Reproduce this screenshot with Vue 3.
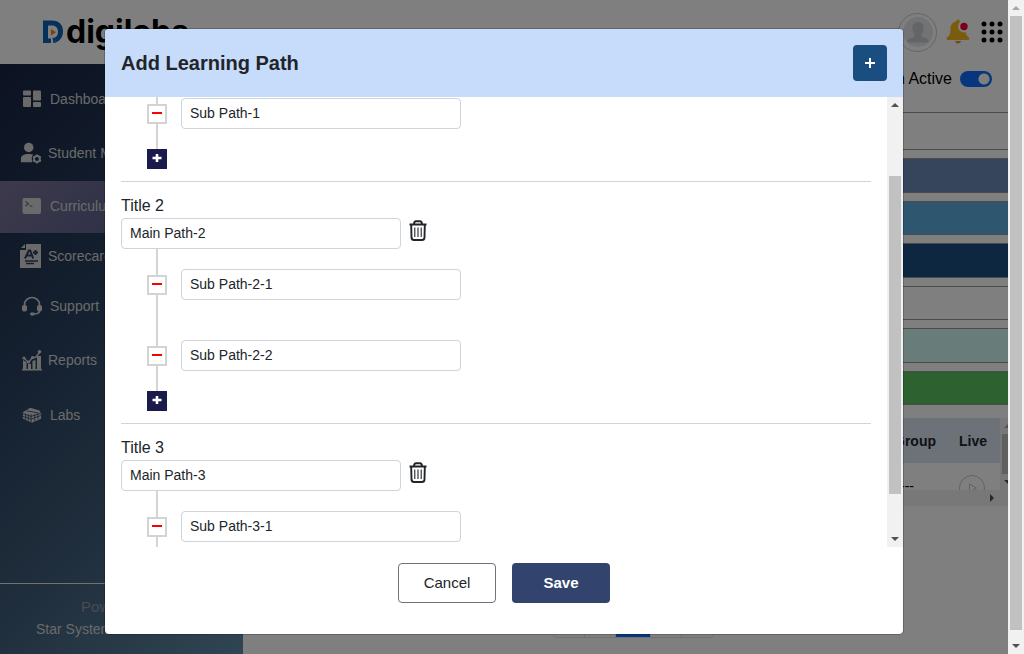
<script setup>
import { ref, onMounted } from 'vue'

const nav = [
  { label: 'Dashboard', icon: 'dashboard', size: 'tall' },
  { label: 'Student Management', icon: 'student', size: 'tall', wide: true },
  { label: 'Curriculum', icon: 'terminal', size: 'mid', active: true },
  { label: 'Scorecard', icon: 'score', size: 'short', wide: true },
  { label: 'Support', icon: 'support', size: 'mid' },
  { label: 'Reports', icon: 'reports', size: 'roomy', wide: true },
  { label: 'Labs', icon: 'labs', size: 'tall' }
]

const bars = ['slate', 'sky', 'navy', 'plain', 'mint', 'green']
const pages = ['«', '‹', '1', '›', '»']

const paths = ref([
  { id: 1, main: '', subs: ['Sub Path-1'] },
  { id: 2, main: 'Main Path-2', subs: ['Sub Path-2-1', 'Sub Path-2-2'] },
  { id: 3, main: 'Main Path-3', subs: ['Sub Path-3-1'] }
])

const list = ref(null)
onMounted(() => {
  list.value.scrollTop = 19
})

function addPath() {
  const id = paths.value.length + 1
  paths.value.push({ id, main: 'Main Path-' + id, subs: [] })
}
</script>

<template>
  <div class="screen">
    <div class="page">
      <header class="topbar">
        <div class="logo">
          <svg width="22" height="24" viewBox="0 0 22 24">
            <path d="M1 0.500h9c7 0 11 4 11 11 0 5.500-3 9.500-7.500 11l-.5-5c2-1 3-3 3-5.500 0-4-2-6.500-6.500-6.500H6V23H1z" fill="#0a62b4" />
            <path d="M5.500 23v-4.500H9V23zM10.500 18l3-.5V23h-2z" fill="#0a62b4" />
            <path d="M9 9l5 3.200-5 3.300z" fill="#f58220" />
          </svg>
          <span>digilabs</span>
        </div>
        <div class="tools">
          <span class="avatar">
            <svg width="30" height="30" viewBox="0 0 30 30">
              <circle cx="15" cy="15" r="15" fill="#e4e6ea" />
              <path d="M15 5c4 0 6 2.500 5.500 7-.3 2.500-1 4-2 5v2.500c2 1.200 5 1.500 7 3v3H4.500v-3c2-1.500 5-1.800 7-3V17c-1-1-1.700-2.500-2-5C9 7.500 11 5 15 5z" fill="#c6cbd3" />
            </svg>
          </span>
          <svg width="26" height="26" viewBox="0 0 26 26">
            <path d="M12 0.500c1 0 1.700.7 1.700 1.700C17.500 3 19.500 6 19.500 10c0 5 1 6.500 3.500 8.500.8.700.3 2.500-1 2.500H2c-1.300 0-1.800-1.800-1-2.500 2.500-2 3.500-3.500 3.500-8.500 0-4 2-7 5.800-7.800 0-1 .7-1.700 1.700-1.700z" fill="#f5b81c" />
            <path d="M9 22h6c-.3 1.600-1.500 2.500-3 2.500s-2.700-.9-3-2.500z" fill="#e59a12" />
            <circle cx="18" cy="7.500" r="6" fill="#fff" />
            <circle cx="18" cy="7.500" r="3.700" fill="#f50032" />
          </svg>
          <svg width="22" height="22" viewBox="0 0 22 22">
            <template v-for="r in 3" :key="r">
              <circle v-for="c in 3" :key="c" :cx="c * 8 - 5" :cy="r * 8 - 5" r="2.500" fill="#000" />
            </template>
          </svg>
        </div>
      </header>

      <div class="columns">
        <aside class="sidebar">
          <nav>
            <a v-for="item in nav" :key="item.label" href="#" class="nav-item" :class="[item.size, { active: item.active, wide: item.wide }]">
              <svg v-if="item.icon === 'dashboard'" width="20" height="18" viewBox="0 0 20 18" fill="currentColor">
                <rect x="1" y="0.500" width="8" height="5" rx="1" /><rect x="1" y="7" width="8" height="10" rx="1" />
                <rect x="11" y="0.500" width="8" height="10" rx="1" /><rect x="11" y="12" width="8" height="5" rx="1" />
              </svg>
              <svg v-else-if="item.icon === 'student'" width="24" height="24" viewBox="0 0 24 24" fill="currentColor">
                <circle cx="9.500" cy="6" r="5.200" />
                <path d="M1 22v-4c0-3 3-5 8.500-5 2 0 3.500.2 4.800.7-1.500 2-2 5-.8 8.300z" />
                <circle cx="18.500" cy="18.500" r="3.200" fill="none" stroke="currentColor" stroke-width="2" />
                <path d="M18.500 13.500v2M18.500 21.500v2M14.200 16l1.700 1M21.100 20l1.700 1M14.200 21l1.700-1M21.100 17l1.700-1" stroke="currentColor" stroke-width="2" />
              </svg>
              <svg v-else-if="item.icon === 'terminal'" width="20" height="18" viewBox="0 0 20 18">
                <rect x="0.500" y="1" width="18.500" height="16" rx="2" fill="currentColor" />
                <path d="M3.500 4.500l3 2.200-3 2.300M7.500 9h3" fill="none" stroke="#666997" stroke-width="1.200" />
              </svg>
              <svg v-else-if="item.icon === 'score'" width="22" height="26" viewBox="0 0 22 26">
                <path d="M6 1h15v24H0V7h6z" fill="currentColor" /><path d="M1 5l4-4v4z" fill="currentColor" />
                <path d="M5 15.500l3.800-8h1.400l3 8M7 12.500h5M13 9.500h5M15.500 7v5" fill="none" stroke="#2a3f61" stroke-width="2" />
                <path d="M5 18h13M6 20.500h8" stroke="#2a3f61" stroke-width="1.300" />
              </svg>
              <svg v-else-if="item.icon === 'support'" width="20" height="20" viewBox="0 0 20 20">
                <path d="M2.500 10V8.500a7.500 7 0 0 1 15 0V15q0 2.500-4.500 3" fill="none" stroke="currentColor" stroke-width="1.600" />
                <rect x="0" y="9" width="5" height="6.500" rx="2" fill="currentColor" /><rect x="15" y="9" width="5" height="6.500" rx="2" fill="currentColor" />
                <rect x="8" y="16.500" width="5" height="3" rx="1.400" fill="currentColor" />
              </svg>
              <svg v-else-if="item.icon === 'reports'" width="22" height="22" viewBox="0 0 22 22" fill="currentColor">
                <path d="M3 11l2 1.500h1.500V21H3zM8 15h3v6H8zM12.500 12l3-1v10h-3zM17 7h4v14h-4zM2 20h20v1.500H2z" />
                <path d="M4 9l4.500 4.500 4-5h3l4-5" fill="none" stroke="currentColor" stroke-width="1.400" />
                <circle cx="4" cy="9" r="1.600" /><circle cx="8.500" cy="13" r="1.600" /><circle cx="12.500" cy="8.500" r="1.600" /><circle cx="19.500" cy="2.700" r="1.800" />
              </svg>
              <svg v-else width="20" height="18" viewBox="0 0 22 18">
                <path d="M1 6l8-5 10 3 2 3v6l-10 4.500L1 13z" fill="currentColor" />
                <path d="M1 7.500l9 3L21 7M1 10.500l9 3 11-4M10 8v9M4 7.500v7M7 8.500v7M14 8v8M17.500 6v8M5 4.500l12 2" fill="none" stroke="#2c4466" stroke-width="0.900" />
              </svg>
              <span>{{ item.label }}</span>
            </a>
          </nav>
          <div class="powered">
            <p class="by">Powered By</p>
            <p class="company">Star Systems</p>
          </div>
        </aside>

        <main class="main">
          <div class="active-row">
            <label for="active">In Active</label>
            <input id="active" type="checkbox" class="switch" checked>
          </div>
          <div class="first-bar"></div>
          <div class="bars">
            <div v-for="b in bars" :key="b" class="bar" :class="b"></div>
          </div>
          <div class="table-box">
            <div class="table-view">
              <table>
                <thead><tr><th>Group</th><th>Live</th></tr></thead>
                <tbody>
                  <tr>
                    <td class="dash">---</td>
                    <td>
                      <svg width="26" height="26" viewBox="0 0 26 26" fill="none" stroke="#c4c4c4">
                        <circle cx="13" cy="13" r="12.500" /><path d="M10.500 9v8l7-4z" />
                      </svg>
                    </td>
                  </tr>
                </tbody>
              </table>
              <div class="inner-bar"><i class="arrow up"></i><i class="inner-thumb"></i><i class="arrow down"></i></div>
            </div>
            <div class="bottom-bar"><i class="arrow right"></i></div>
          </div>
          <div class="pager">
            <button v-for="p in pages" :key="p" type="button" :class="{ current: p === '1' }">{{ p }}</button>
          </div>
        </main>
      </div>

      <div class="overlay">
        <section class="modal" role="dialog" aria-labelledby="modal-title">
          <header class="modal-head">
            <h1 id="modal-title">Add Learning Path</h1>
            <button type="button" class="add-main" aria-label="Add path" @click="addPath">
              <svg width="12" height="12" viewBox="0 0 12 12"><path d="M6 1v10M1 6h10" stroke="#fff" stroke-width="2" /></svg>
            </button>
          </header>
          <div class="modal-body">
            <div ref="list" class="list">
              <section v-for="p in paths" :key="p.id" class="group">
                <template v-if="p.main">
                  <label class="title" :for="'main-' + p.id">Title {{ p.id }}</label>
                  <div class="main-line">
                    <input :id="'main-' + p.id" v-model="p.main" type="text" class="field">
                    <button type="button" class="trash" aria-label="Delete path">
                      <svg width="18" height="22" viewBox="0 0 18 22" fill="none" stroke="#212529">
                        <path d="M2.200 5l.3 12.700q.2 2.300 2.500 2.300h8q2.300 0 2.500-2.300L15.800 5" stroke-width="1.900" />
                        <path d="M.5 4.500h17M5 4Q5.200 1.200 7 1.200h4q1.800 0 2 2.800" stroke-width="1.900" />
                        <path d="M5.800 7.500v9.500M9 7.500v9.500M12.200 7.500v9.500" stroke-width="1.100" />
                      </svg>
                    </button>
                  </div>
                </template>
                <div v-for="(s, i) in p.subs" :key="i" class="sub">
                  <div class="rail">
                    <span class="line before"></span>
                    <button type="button" class="minus" aria-label="Remove sub path"><svg width="10" height="2"><rect width="10" height="2" fill="#f00" /></svg></button>
                    <span class="line after"></span>
                  </div>
                  <input v-model="p.subs[i]" type="text" class="field" :aria-label="'Sub path ' + (i + 1)">
                </div>
                <button type="button" class="plus" aria-label="Add sub path">
                  <svg width="10" height="8" viewBox="0 0 10 8"><path d="M5 0v8M0.500 4h9" stroke="#fff" stroke-width="2.600" /></svg>
                </button>
              </section>
            </div>
            <div class="scroll"><i class="arrow up dark"></i><i class="thumb"></i><i class="arrow down"></i></div>
          </div>
          <footer class="modal-foot">
            <button type="button" class="btn cancel">Cancel</button>
            <button type="button" class="btn save">Save</button>
          </footer>
        </section>
      </div>
    </div>
    <div class="scroll page-scroll"><i class="arrow up"></i><i class="thumb"></i><i class="arrow down"></i></div>
  </div>
</template>

<style>
body { margin: 0; background: #fff; overflow: hidden; }
</style>

<style scoped>
* { box-sizing: border-box; }
.screen { display: flex; height: 100vh; font-family: "Liberation Sans", Arial, sans-serif; font-size: 14px; color: #212529; }
button, input { font: inherit; color: inherit; margin: 0; }
p, h1 { margin: 0; }
svg { display: block; flex: none; }
.page { position: relative; flex: 1; min-width: 0; display: flex; flex-direction: column; overflow: hidden; }

.topbar { display: flex; justify-content: space-between; align-items: center; height: 64px; padding: 0 5px 0 42px; flex: none; }
.logo { display: flex; align-items: center; gap: 2px; font: 700 32px/36px Inter, "Open Sans", sans-serif; color: #000; }
.tools { display: flex; align-items: center; gap: 9px; }
.avatar { display: flex; align-items: center; justify-content: center; width: 39px; height: 39px; border: 1px solid #c9c9c9; border-radius: 50%; }

.columns { display: flex; flex: 1; min-height: 0; }
.sidebar { display: flex; flex-direction: column; justify-content: space-between; width: 243px; flex: none; padding-top: 9px; background: linear-gradient(135deg, #182444 0%, #2a4260 40%, #42607c 70%, #608ba8 100%); color: #d5d5d5; }
.nav-item { display: flex; align-items: center; gap: 8px; padding: 0 0 2px 22px; color: inherit; text-decoration: none; }
.nav-item.wide { padding-left: 20px; gap: 6px; }
.nav-item.wide svg { width: 22px; }
.short { height: 48px; }
.mid { height: 52px; }
.tall { height: 54px; }
.roomy { height: 56px; }
.active { background: linear-gradient(135deg, #7b7498, #46568a); }
.powered { border-top: 1px solid #e4e4e4; height: 71px; padding-top: 12px; line-height: 22px; }
.by { text-align: center; font-size: 15px; color: #8e99a5; }
.company { padding-left: 36px; }

.main { flex: 1; min-width: 0; display: flex; flex-direction: column; }
.active-row { display: flex; justify-content: flex-end; align-items: center; gap: 8px; height: 30px; padding-right: 16px; font-size: 16px; color: #000; }
.switch { appearance: none; width: 32px; height: 16px; border-radius: 8px; background: radial-gradient(circle at 24px 8px, #fff 5px, #0d6efd 6px); }
.first-bar { height: 38px; margin-top: 18px; border: 1px solid #999; border-right: 0; flex: none; }
.bars { display: grid; grid-template-rows: repeat(6, 1fr); gap: 8px; height: 247px; margin-top: 8px; flex: none; }
.bar { border: 1px solid #999; border-right: 0; }
.slate { background: #6e8ab8; }
.sky { background: #5cacdc; }
.navy { background: #1a4e80; }
.mint { background: #d0faf4; }
.green { background: #5ac460; }
.table-box { margin-top: 13px; height: 88px; flex: none; }
.table-view { display: flex; height: 72px; overflow: hidden; }
table { flex: 1; border-collapse: collapse; align-self: flex-start; }
th { height: 45px; padding: 0; background: #d9e4f0; text-align: right; color: #212529; }
th:last-child, td:last-child { width: 64px; padding: 0 13px 0 0; }
td { height: 50px; padding: 0; text-align: right; color: #000; }
td:last-child { padding-right: 15px; }
td:last-child svg { margin-left: auto; }
td.dash { padding: 0 22px 4px 0; }
.inner-bar { width: 8px; overflow: hidden; background: #f1f1f1; display: flex; flex-direction: column; align-items: flex-start; padding: 6px 0 6px 4px; gap: 6px; }
.inner-thumb { width: 12px; flex: 1; margin-left: -2px; background: #c1c1c1; }
.bottom-bar { height: 16px; background: #f1f1f1; display: flex; justify-content: flex-end; align-items: center; padding-right: 14px; }
.pager { display: flex; align-self: flex-start; margin: 102px 0 0 310px; border: 1px solid #dee2e6; border-radius: 4px; overflow: hidden; height: 30px; flex: none; }
.pager button { width: 31px; padding: 0; border: 0; border-right: 1px solid #dee2e6; background: none; color: #0d6efd; line-height: 20px; }
.pager .current { width: 35px; background: #0d6efd; color: #fff; }
.pager button:last-child { border-right: 0; }

.overlay { position: absolute; inset: 0; background: rgba(0, 0, 0, .5); display: flex; justify-content: center; align-items: flex-start; padding-top: 28px; }
.modal { width: 800px; max-width: 100%; background: #fff; background-clip: padding-box; border: 1px solid rgba(0, 0, 0, .2); border-radius: 5px; overflow: hidden; }
.modal-head { display: flex; align-items: center; justify-content: space-between; height: 68px; padding: 0 16px; background: #c7dbfb; }
h1 { font-size: 20px; line-height: 30px; font-weight: 700; }
.add-main { display: flex; align-items: center; justify-content: center; width: 34px; height: 36px; padding: 0; border: 0; border-radius: 4px; background: #1a4e80; }
.modal-body { display: flex; height: 450px; }
.list { flex: 1; overflow: hidden; padding: 0 16px; }
.group { padding-bottom: 12px; border-bottom: 1px solid #d3d3d3; }
.group + .group { padding-top: 12px; }
.title { display: block; font-size: 16px; line-height: 24px; }
.main-line { display: flex; align-items: flex-start; gap: 8px; }
.field { width: 280px; height: 31px; padding: 0 8px 2px; border: 1px solid #ced4da; border-radius: 4px; background: #fff; line-height: 20px; outline: 0; }
.trash { padding: 2px 0; border: 0; background: none; }
.sub { display: flex; gap: 14px; padding-left: 26px; }
.sub .field { margin-top: 20px; }
.rail { display: flex; flex-direction: column; align-items: center; width: 20px; }
.line { width: 2px; background: #d3d3d3; }
.before { height: 26px; }
.after { height: 25px; }
.minus, .plus { display: flex; justify-content: center; width: 20px; height: 20px; border: 0; }
.minus { padding: 6px 0 0; border: 2px solid #d3d3d3; background: #fff; }
.plus { margin-left: 26px; padding: 5px 0 0; background: #1a1a4b; }
.modal-foot { display: flex; justify-content: center; gap: 16px; padding: 16px 0 31px; }
.btn { width: 98px; height: 40px; padding: 0 0 2px; border-radius: 4px; font-size: 15px; }
.cancel { border: 1px solid #6c757d; background: #fff; }
.save { border: 0; background: #32446e; color: #fff; font-weight: 700; }

.scroll { display: flex; flex-direction: column; align-items: center; width: 16px; flex: none; padding: 6px 0; background: #f1f1f1; }
.thumb { width: 12px; background: #c1c1c1; }
.modal-body .thumb { height: 318px; margin: 69px auto auto; }
.page-scroll .thumb { flex: 1; margin: 6px 0 14px; }
.arrow { width: 0; height: 0; flex: none; border: 4px solid transparent; }
.arrow.up { border-top: 0; border-bottom-color: #a3a3a3; }
.arrow.down { border-bottom: 0; border-top-color: #505050; }
.arrow.up.dark { border-bottom-color: #505050; }
.arrow.right { border-right: 0; border-left-color: #505050; }
</style>
